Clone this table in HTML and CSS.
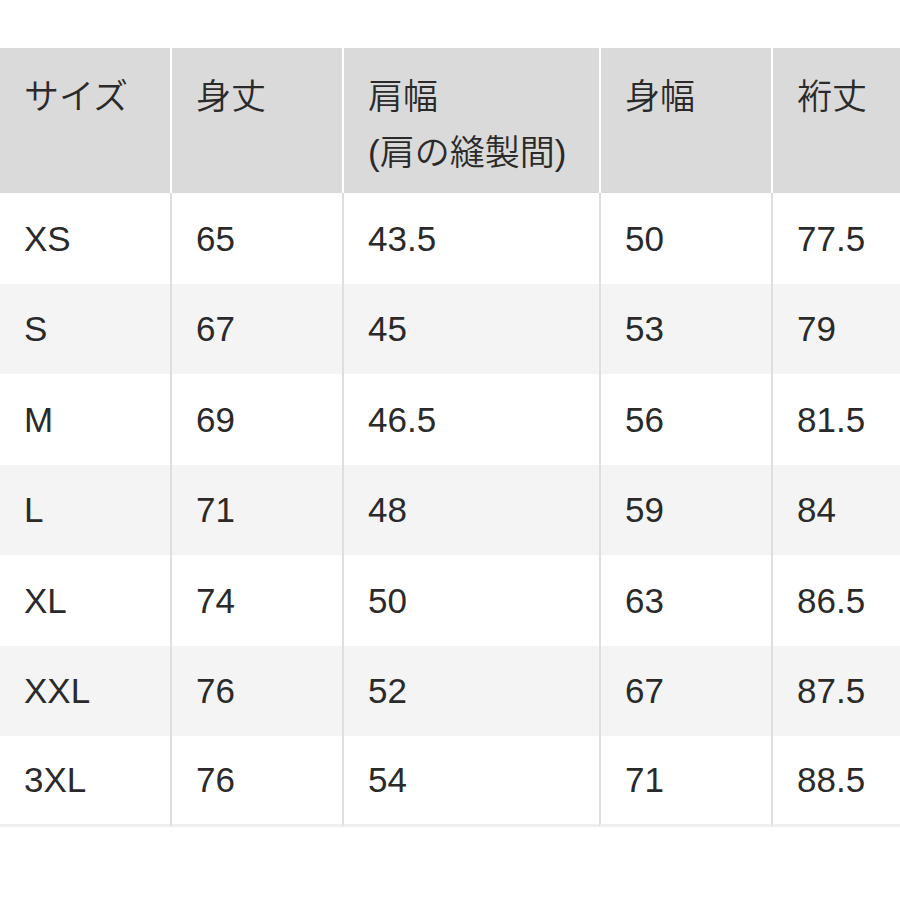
FILE: index.html
```html
<!DOCTYPE html>
<html lang="ja">
<head>
<meta charset="utf-8">
<title>サイズ表</title>
<link rel="stylesheet" href="styles.css">
</head>
<body>
<div class="page">
  <table class="size-table">
    <colgroup>
      <col class="c1"><col class="c2"><col class="c3"><col class="c4"><col class="c5">
    </colgroup>
    <thead>
      <tr>
        <th>サイズ</th>
        <th>身丈</th>
        <th>肩幅<br>(肩の縫製間)</th>
        <th>身幅</th>
        <th>裄丈</th>
      </tr>
    </thead>
    <tbody>
      <tr><td>XS</td><td>65</td><td>43.5</td><td>50</td><td>77.5</td></tr>
      <tr class="alt"><td>S</td><td>67</td><td>45</td><td>53</td><td>79</td></tr>
      <tr><td>M</td><td>69</td><td>46.5</td><td>56</td><td>81.5</td></tr>
      <tr class="alt"><td>L</td><td>71</td><td>48</td><td>59</td><td>84</td></tr>
      <tr><td>XL</td><td>74</td><td>50</td><td>63</td><td>86.5</td></tr>
      <tr class="alt"><td>XXL</td><td>76</td><td>52</td><td>67</td><td>87.5</td></tr>
      <tr class="last"><td>3XL</td><td>76</td><td>54</td><td>71</td><td>88.5</td></tr>
    </tbody>
  </table>
</div>
</body>
</html>
```
FILE: styles.css
```css
html, body {
  margin: 0;
  padding: 0;
  background: #ffffff;
}

.page {
  padding-top: 48px;
}

.size-table {
  width: 900px;
  border-collapse: separate;
  border-spacing: 0;
  table-layout: fixed;
  font-family: "Liberation Sans", "Noto Sans CJK JP", sans-serif;
  color: #2a2a2a;
}

.c1 { width: 170px; }
.c2 { width: 172px; }
.c3 { width: 257px; }
.c4 { width: 172px; }
.c5 { width: 129px; }

.size-table th {
  background: #dadada;
  height: 145px;
  box-sizing: border-box;
  padding: 21px 0 0 24px;
  vertical-align: top;
  text-align: left;
  font-weight: 350;
  font-size: 35px;
  line-height: 56px;
}

.size-table th + th {
  border-left: 2px solid #ffffff;
  padding-left: 24px;
}

.size-table td {
  height: 90.5px;
  box-sizing: border-box;
  padding: 1px 0 0 24px;
  vertical-align: middle;
  text-align: left;
  font-size: 35px;
  line-height: 40px;
  background: #ffffff;
}

.size-table td + td {
  border-left: 2px solid #dedede;
}

.size-table tr.alt td {
  background: #f4f4f4;
}

.size-table tr.last td {
  border-bottom: 3px solid #efefef;
}
```
